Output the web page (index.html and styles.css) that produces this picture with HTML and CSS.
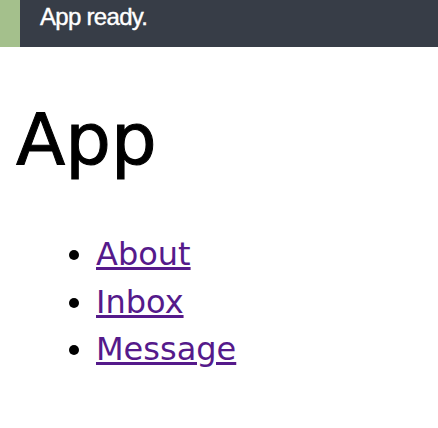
FILE: index.html
```html
<!DOCTYPE html>
<html>
<head>
<meta charset="utf-8">
<link rel="stylesheet" href="styles.css">
</head>
<body>
<div class="banner">
  <div class="banner-accent"></div>
  <div class="banner-text">App ready.</div>
</div>
<main class="content">
  <h1 class="title">App</h1>
  <ul class="nav">
    <li><a href="#about">About</a></li>
    <li><a href="#inbox">Inbox</a></li>
    <li><a href="#message">Message</a></li>
  </ul>
</main>
</body>
</html>
```
FILE: styles.css
```css
html, body {
  margin: 0;
  padding: 0;
  background: #ffffff;
}
body {
  font-family: "DejaVu Sans", sans-serif;
  color: #000000;
}
.banner {
  display: flex;
  height: 47px;
  background: #373d47;
}
.banner-accent {
  width: 20px;
  background: #a4c08c;
}
.banner-text {
  font-family: "Liberation Sans", Arial, sans-serif;
  font-size: 24px;
  letter-spacing: -0.7px;
  color: #ffffff;
  padding: 3px 0 0 20px;
  line-height: normal;
  -webkit-text-stroke: 0.4px #ffffff;
}
.content {
  padding: 0 16px;
}
.title {
  font-size: 72px;
  font-weight: normal;
  line-height: normal;
  margin: 50px 0 0 0;
  -webkit-text-stroke: 1px #000000;
}
.nav {
  margin: 50px 0 0 0;
  padding-left: 80px;
  font-size: 32px;
  line-height: 47.5px;
}
.nav a {
  color: #551a8b;
  text-decoration: underline;
}
```
